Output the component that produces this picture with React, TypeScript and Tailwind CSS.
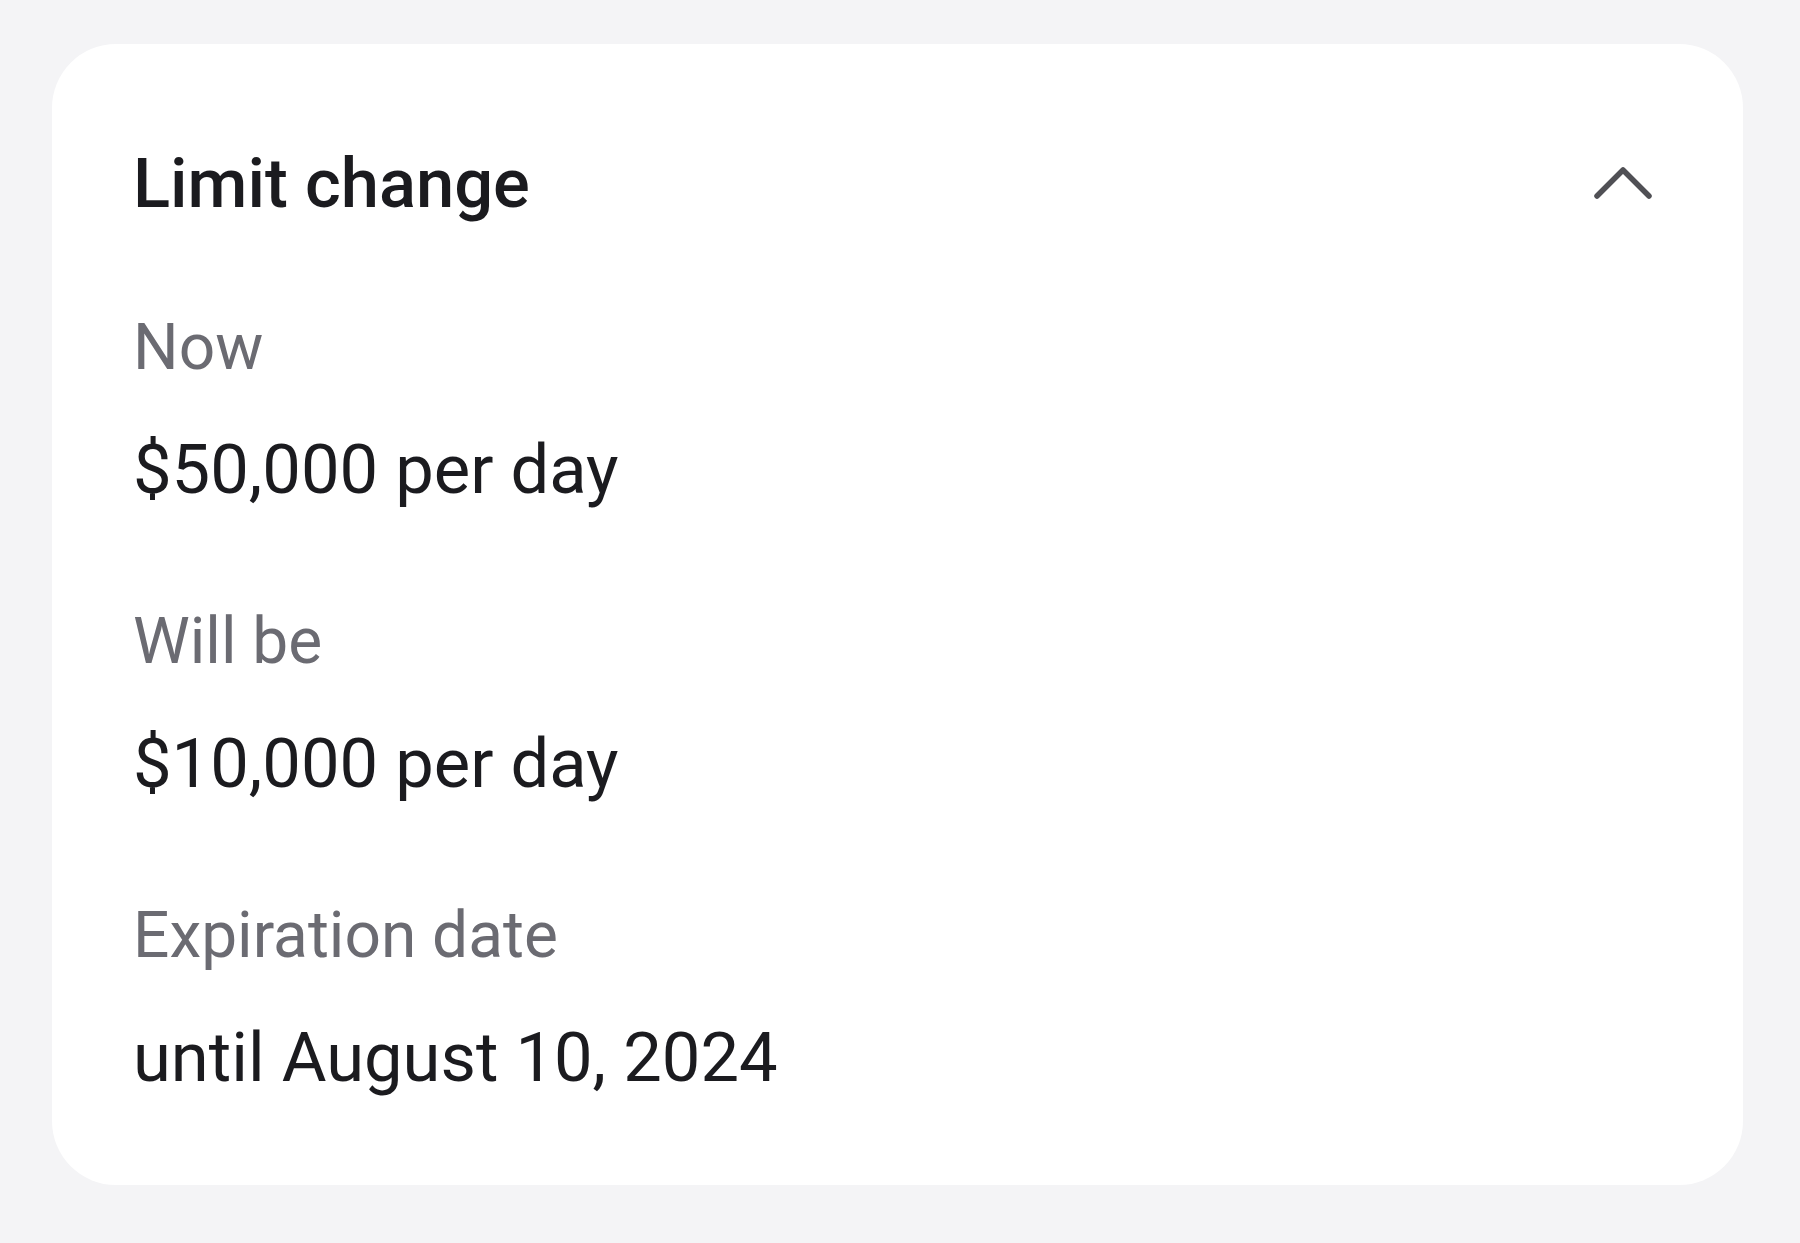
import React from "react";

export default function App() {
  return (
    <div
      className="w-[1800px] h-[1243px] bg-[#f4f4f6] pt-[44px] pl-[52px]"
      style={{ fontFamily: "Roboto, 'Noto Sans', sans-serif" }}
    >
      <div className="w-[1691px] h-[1141px] bg-white rounded-[64px] pl-[81px] pr-[90px] pt-[100px]">
        <div className="flex items-center justify-between h-[80px]">
          <div className="text-[68.7px] leading-[80px] font-medium text-[#1b1b1f]">Limit change</div>
          <svg width="60" height="38" viewBox="0 0 60 38" fill="none" className="mt-[-4px]">
            <polyline
              points="4,33 30,7 56,33"
              stroke="#505055"
              strokeWidth="5.5"
              strokeLinecap="round"
              strokeLinejoin="round"
            />
          </svg>
        </div>
        <div className="mt-[84px] flex flex-col gap-[92px]">
          {[
            ["Now", "$50,000 per day"],
            ["Will be", "$10,000 per day"],
            ["Expiration date", "until August 10, 2024"],
          ].map(([label, value]) => (
            <div key={label} className="flex flex-col gap-[42px]">
              <div className="text-[64px] leading-[80px] text-[#6b6b72]">{label}</div>
              <div className="text-[68.7px] leading-[80px] text-[#1b1b1f]">{value}</div>
            </div>
          ))}
        </div>
      </div>
    </div>
  );
}
